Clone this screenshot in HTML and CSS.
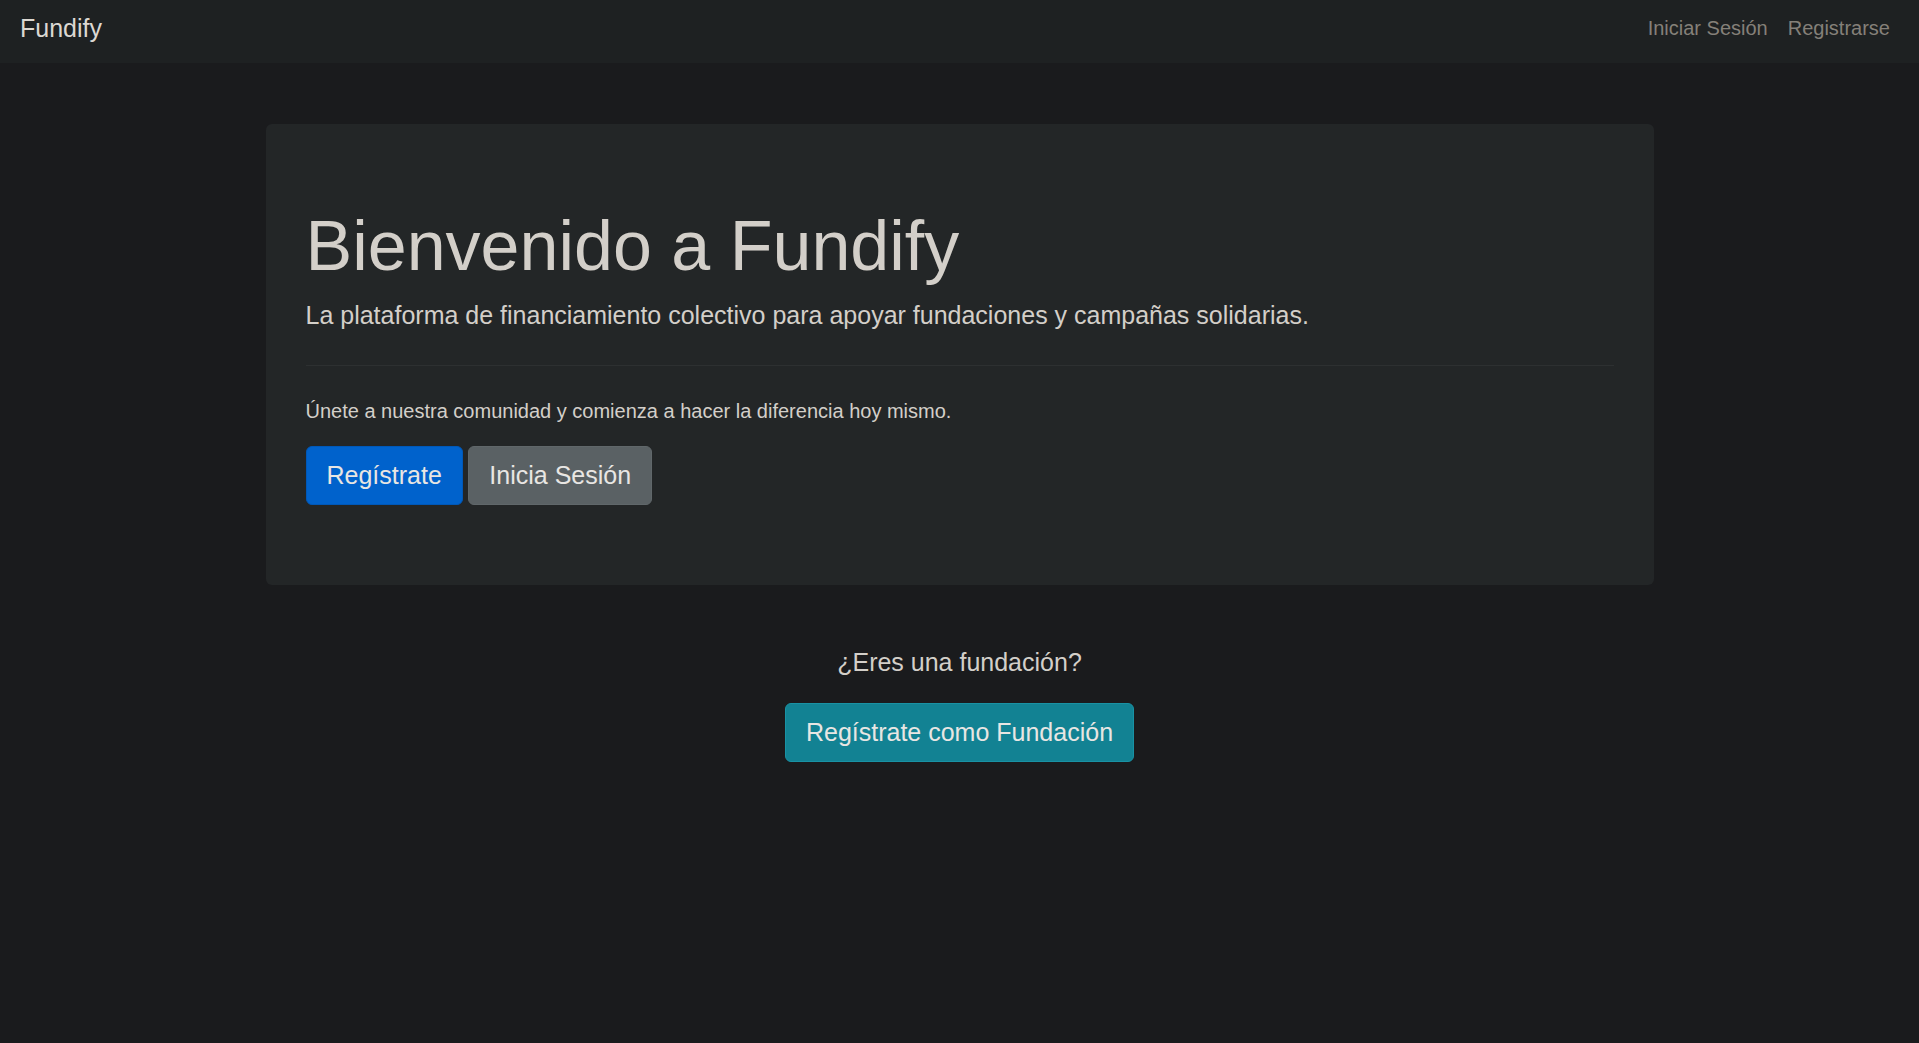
FILE: index.html
```html
<!DOCTYPE html>
<html lang="es">
<head>
<meta charset="utf-8">
<title>Fundify</title>
<link rel="stylesheet" href="styles.css">
</head>
<body>
<nav class="navbar">
  <a class="brand" href="#">Fundify</a>
  <div class="nav-links">
    <a class="nav-link" href="#">Iniciar Sesión</a>
    <a class="nav-link" href="#">Registrarse</a>
  </div>
</nav>
<main class="container">
  <section class="jumbotron">
    <h1 class="display">Bienvenido a Fundify</h1>
    <p class="lead">La plataforma de financiamiento colectivo para apoyar fundaciones y campañas solidarias.</p>
    <hr class="divider">
    <p class="text">Únete a nuestra comunidad y comienza a hacer la diferencia hoy mismo.</p>
    <div class="actions">
      <a class="btn btn-primary" href="#">Regístrate</a>
      <a class="btn btn-secondary" href="#">Inicia Sesión</a>
    </div>
  </section>
  <section class="foundation">
    <p class="question">¿Eres una fundación?</p>
    <a class="btn btn-info" href="#">Regístrate como Fundación</a>
  </section>
</main>
</body>
</html>
```
FILE: styles.css
```css
* { box-sizing: border-box; }
html, body {
  margin: 0;
  padding: 0;
}
body {
  background: #1a1b1d;
  color: #d3cfc9;
  font-family: "Liberation Sans", Arial, sans-serif;
  font-size: 20px;
  line-height: 1.5;
}
a { text-decoration: none; }

.navbar {
  height: 63px;
  background: #1e2122;
  display: flex;
  align-items: flex-start;
  justify-content: space-between;
  padding: 10px 19px 0 20px;
}
.brand {
  font-size: 25px;
  line-height: 37.5px;
  color: #dcd8d2;
}
.nav-links {
  display: flex;
  margin-top: 3px;
}
.nav-link {
  font-size: 20px;
  line-height: 30px;
  padding: 0 10px;
  color: #858079;
}

.container {
  width: 1388px;
  margin: 61px auto 0 auto;
}
.jumbotron {
  background: #232627;
  border-radius: 6px;
  padding: 80px 40px;
}
.display {
  margin: 0 0 9px 0;
  font-size: 70px;
  font-weight: 300;
  line-height: 1.2;
  color: #d3cfc9;
}
.lead {
  margin: 0;
  font-size: 25px;
  font-weight: 300;
  line-height: 37.5px;
}
.divider {
  margin: 30px 0;
  border: 0;
  border-top: 1px solid #2d3031;
  height: 0;
}
.text {
  margin: 0 0 20px 0;
  font-size: 20px;
  line-height: 30px;
}
.actions {
  display: flex;
  gap: 5.5px;
}
.btn {
  display: inline-block;
  font-size: 25px;
  line-height: 37.5px;
  padding: 10px 20px;
  border: 1px solid transparent;
  border-radius: 6px;
  color: #e8e6e3;
}
.btn-primary {
  background: #0062cc;
  border-color: #0058b8;
}
.btn-secondary {
  background: #5a6164;
  border-color: #60676a;
}
.btn-info {
  background: #128293;
  border-color: #1992a4;
}

.foundation {
  margin-top: 59px;
  display: flex;
  flex-direction: column;
  align-items: center;
}
.question {
  margin: 0 0 21px 0;
  font-size: 25px;
  font-weight: 300;
  line-height: 37.5px;
  color: #d3cfc9;
}
```
